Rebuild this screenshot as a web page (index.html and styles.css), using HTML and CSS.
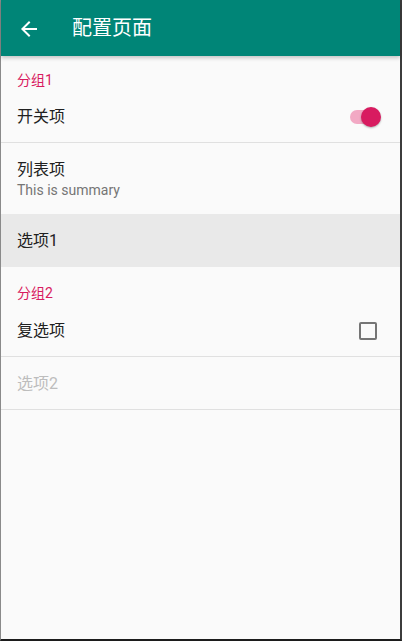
FILE: index.html
```html
<!DOCTYPE html>
<html lang="zh">
<head>
<meta charset="utf-8">
<title>配置页面</title>
<link rel="stylesheet" href="styles.css">
</head>
<body>
<div class="frame">
  <header class="appbar">
    <svg class="back" viewBox="0 0 24 24" width="24" height="24"><path fill="#fff" d="M20 11H7.83l5.59-5.59L12 4l-8 8 8 8 1.41-1.41L7.83 13H20v-2z"/></svg>
    <h1 class="title">配置页面</h1>
  </header>
  <main class="prefs">
    <div class="category category-first">分组1</div>
    <div class="row">
      <span class="label">开关项</span>
      <span class="switch"><span class="track"></span><span class="thumb"></span></span>
    </div>
    <div class="divider"></div>
    <div class="row row-two">
      <span class="label">列表项</span>
      <span class="summary">This is summary</span>
    </div>
    <div class="row row-selected">
      <span class="label">选项1</span>
    </div>
    <div class="category">分组2</div>
    <div class="row">
      <span class="label">复选项</span>
      <span class="checkbox"></span>
    </div>
    <div class="divider"></div>
    <div class="row">
      <span class="label label-disabled">选项2</span>
    </div>
    <div class="divider"></div>
  </main>
</div>
</body>
</html>
```
FILE: styles.css
```css
* { box-sizing: border-box; }
html, body {
  margin: 0;
  padding: 0;
  width: 402px;
  height: 641px;
  overflow: hidden;
  font-family: Roboto, "Noto Sans CJK SC", sans-serif;
}
.frame {
  width: 402px;
  height: 641px;
  background: #fafafa;
  border-left: 1px solid #8a8a8a;
  border-right: 2px solid #3c3c3c;
  border-bottom: 2px solid #1c1c1c;
  display: flex;
  flex-direction: column;
}
.appbar {
  height: 56px;
  flex: none;
  background: #008577;
  display: flex;
  align-items: center;
  padding-left: 16px;
  box-shadow: 0 2px 4px rgba(0,0,0,0.22);
  position: relative;
  z-index: 1;
}
.back { display: block; flex: none; margin-top: 1px; }
.title {
  margin: 0 0 0 31px;
  font-size: 20px;
  font-weight: 400;
  color: #fff;
  line-height: 24px;
  font-family: Roboto, "Noto Sans CJK SC", sans-serif;
}
.prefs { display: flex; flex-direction: column; }
.category {
  height: 37px;
  padding: 16px 0 0 16px;
  font-size: 14px;
  line-height: 20px;
  color: #d81b60;
}
.category-first { height: 34px; padding-top: 14px; }
.row {
  height: 52px;
  display: flex;
  align-items: center;
  padding: 1px 23px 0 16px;
  justify-content: space-between;
}
.row-two {
  height: 71px;
  flex-direction: column;
  align-items: flex-start;
  justify-content: center;
  padding-top: 1px;
}
.row-selected { height: 53px; background: #e9e9e9; }
.label {
  font-size: 16px;
  line-height: 22px;
  color: #212121;
}
.label-disabled { color: #bdbdbd; }
.summary {
  font-size: 14px;
  line-height: 20px;
  color: #757575;
  margin-top: -1px;
}
.divider { height: 1px; background: #e0e0e0; flex: none; }
.switch {
  position: relative;
  width: 31px;
  height: 20px;
  margin-right: -4px;
}
.track {
  position: absolute;
  left: 0;
  top: 3px;
  width: 28px;
  height: 14px;
  border-radius: 7px;
  background: #f2a9c4;
}
.thumb {
  position: absolute;
  right: 0;
  top: 0;
  width: 20px;
  height: 20px;
  border-radius: 50%;
  background: #d81b60;
  box-shadow: 0 1px 2px rgba(0,0,0,0.3);
}
.checkbox {
  width: 18px;
  height: 18px;
  border: 2px solid #757575;
  border-radius: 2px;
}
```
